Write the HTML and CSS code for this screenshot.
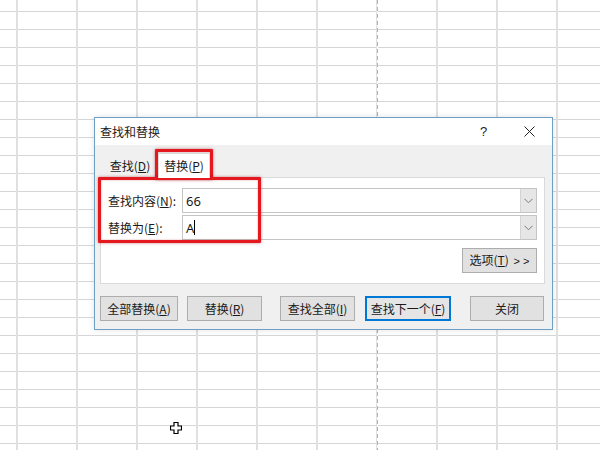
FILE: index.html
```html
<!DOCTYPE html>
<html lang="zh-CN">
<head>
<meta charset="utf-8">
<title>查找和替换</title>
<link rel="stylesheet" href="styles.css">
</head>
<body>
<div class="sheet">
  <div class="dialog">
    <div class="titlebar">
      <span class="title">查找和替换</span>
      <span class="help">?</span>
      <span class="close"><svg width="11" height="11" viewBox="0 0 11 11"><path d="M0.5 0.5 L10.5 10.5 M10.5 0.5 L0.5 10.5" stroke="#222" stroke-width="1" fill="none"/></svg></span>
    </div>
    <div class="content">
      <div class="tabs">
        <div class="tab">查找(<u>D</u>)</div>
        <div class="tab active">替换(<u>P</u>)</div>
      </div>
      <div class="panel">
        <div class="row">
          <span class="label">查找内容(<u>N</u>):</span>
          <div class="combo"><span class="val">66</span><span class="drop"><svg width="9" height="6" viewBox="0 0 9 6"><path d="M0.5 0.8 L4.5 4.8 L8.5 0.8" stroke="#7a7a7a" stroke-width="1" fill="none"/></svg></span></div>
        </div>
        <div class="row">
          <span class="label">替换为(<u>E</u>):</span>
          <div class="combo"><span class="val">A<span class="caret"></span></span><span class="drop"><svg width="9" height="6" viewBox="0 0 9 6"><path d="M0.5 0.8 L4.5 4.8 L8.5 0.8" stroke="#7a7a7a" stroke-width="1" fill="none"/></svg></span></div>
        </div>
        <div class="opts"><button class="btn btn-opts">选项(<u>T</u>) <span class="arrows">&gt; &gt;</span></button></div>
      </div>
      <div class="actions">
        <button class="btn b1">全部替换(<u>A</u>)</button>
        <button class="btn b2">替换(<u>R</u>)</button>
        <button class="btn b3">查找全部(<u>I</u>)</button>
        <button class="btn b4 focus">查找下一个(<u>F</u>)</button>
        <button class="btn b5">关闭</button>
      </div>
    </div>
  </div>
  <div class="mark mark-tab"></div>
  <div class="mark mark-fields"></div>
  <svg class="cursor" width="12" height="12" viewBox="0 0 12 12"><path d="M4 0.5 H8 V4 H11.5 V8 H8 V11.5 H4 V8 H0.5 V4 H4 Z" fill="#fff" stroke="#000" stroke-width="1.2"/></svg>
</div>
</body>
</html>
```

FILE: styles.css
```css
html, body {
  margin: 0;
  padding: 0;
}
body {
  width: 600px;
  height: 450px;
  overflow: hidden;
  font-family: "Noto Sans CJK SC", "Noto Sans", sans-serif;
  font-size: 12px;
  color: #1a1a1a;
  background-color: #fff;
  background-image:
    linear-gradient(to bottom, #b0b0b0 4px, #fff 4px),
    linear-gradient(to right, #e0e0e0 2px, transparent 2px),
    linear-gradient(to bottom, #d6d6d6 1px, transparent 1px);
  background-size: 1px 7px, 60px 100%, 100% 18px;
  background-position: 377px 0, 16px 0, 0 11px;
  background-repeat: repeat-y, repeat-x, repeat-y;
}
.sheet {
  position: relative;
  width: 600px;
  height: 450px;
}
.dialog {
  position: absolute;
  left: 94px;
  top: 117px;
  width: 459px;
  height: 213px;
  box-sizing: border-box;
  border: 1px solid #6e9fc4;
  background: #f0f0f0;
  display: flex;
  flex-direction: column;
  box-shadow: 0 0 6px rgba(0,0,0,0.12);
}
.titlebar {
  height: 27px;
  background: #fff;
  display: flex;
  align-items: center;
  padding-left: 5px;
  line-height: 16px;
}
.title {
  flex: 1;
}
.help {
  font-family: "Liberation Sans", sans-serif;
  font-size: 13px;
  color: #222;
  width: 8px;
  margin-right: 36px;
}
.close {
  display: flex;
  width: 11px;
  height: 11px;
  margin-right: 17px;
}
.content {
  flex: 1;
  padding: 0 7px 8px 5px;
  display: flex;
  flex-direction: column;
}
.tabs {
  height: 32px;
  display: flex;
  align-items: flex-end;
  padding-left: 4px;
}
.tab {
  height: 22px;
  line-height: 20px;
  width: 52px;
  box-sizing: border-box;
  text-align: center;
  margin-bottom: -1px;
  position: relative;
  white-space: nowrap;
}
.tab.active {
  height: 25px;
  line-height: 24px;
  width: 52px;
  margin-left: 2px;
  background: #fff;
  border: 1px solid #d9d9d9;
  border-bottom: none;
  z-index: 1;
}
.panel {
  height: 107px;
  box-sizing: border-box;
  background: #fff;
  border: 1px solid #d9d9d9;
  padding: 10px 7px 0 7px;
  display: flex;
  flex-direction: column;
}
.row {
  height: 25px;
  display: flex;
  align-items: center;
  margin-bottom: 2px;
}
.label {
  width: 74px;
  white-space: nowrap;
}
.combo {
  flex: 1;
  height: 25px;
  box-sizing: border-box;
  border: 1px solid #c4c4c4;
  display: flex;
  align-items: center;
}
.val {
  flex: 1;
  padding-left: 3px;
  font-family: "Noto Sans", sans-serif;
  font-size: 13px;
  display: flex;
  align-items: center;
}
.caret {
  display: inline-block;
  width: 1px;
  height: 15px;
  background: #000;
}
.drop {
  width: 16px;
  height: 23px;
  box-sizing: border-box;
  background: #e6e6e6;
  border-left: 1px solid #d4d4d4;
  display: flex;
  align-items: center;
  justify-content: center;
}
.opts {
  margin-top: 6px;
  display: flex;
  justify-content: flex-end;
}
.btn {
  height: 25px;
  box-sizing: border-box;
  border: 1px solid #adadad;
  background: #e1e1e1;
  font-family: "Noto Sans CJK SC", "Noto Sans", sans-serif;
  font-size: 12px;
  line-height: 16px;
  color: #1a1a1a;
  padding: 0;
  white-space: nowrap;
}
.btn-opts {
  width: 75px;
}
.arrows {
  font-family: "Liberation Sans", sans-serif;
  font-size: 11px;
  margin-left: 2px;
}
.actions {
  margin-top: 12px;
  display: flex;
}
.b1 { width: 78px; }
.b2 { width: 75px; margin-left: 9px; }
.b3 { width: 75px; margin-left: 18px; }
.b4 { width: 86px; margin-left: 10px; }
.b5 { width: 74px; margin-left: 19px; }
.btn.focus {
  border: 1px solid #0078d7;
  box-shadow: inset 0 0 0 1px #0078d7;
  background: #e5e5e5;
}
.mark {
  position: absolute;
  border: 3px solid #e3191f;
  box-shadow: 0 0 3px rgba(160,0,0,0.5), inset 0 0 2px rgba(160,0,0,0.4);
  border-radius: 1px;
}
.mark-tab {
  left: 155px;
  top: 149px;
  width: 52px;
  height: 25px;
}
.mark-fields {
  left: 98px;
  top: 177px;
  width: 157px;
  height: 60px;
}
.cursor {
  position: absolute;
  left: 170px;
  top: 422px;
}
```
